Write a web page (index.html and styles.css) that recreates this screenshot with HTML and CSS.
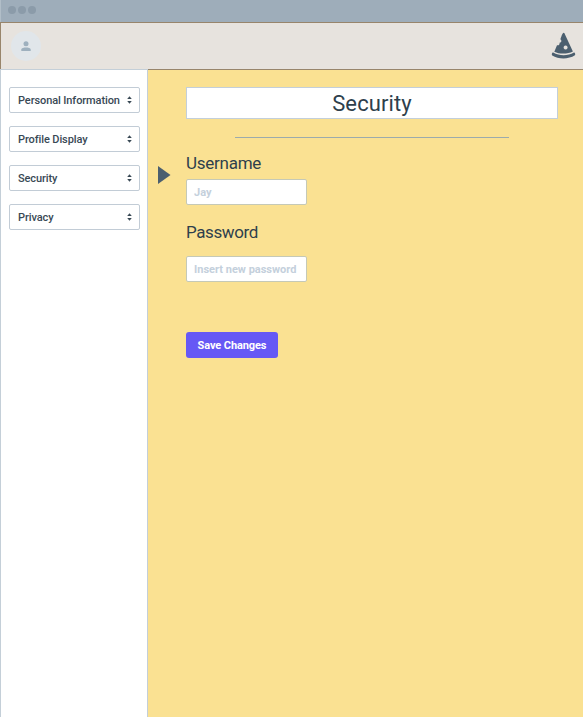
FILE: index.html
```html
<!DOCTYPE html>
<html lang="en">
<head>
<meta charset="utf-8">
<title>Security</title>
<link rel="stylesheet" href="styles.css">
</head>
<body>
<div class="window-bar"><i></i><i></i><i></i></div>
<header class="header">
  <div class="avatar">
    <svg width="10" height="11" viewBox="0 0 10 11"><circle cx="5" cy="2.8" r="2.5"/><path d="M.3 10V8.500C.3 7.200 3 6.600 5 6.600s4.700.6 4.700 1.900V10z"/></svg>
  </div>
  <svg class="pizza" width="26" height="28" viewBox="0 0 26 28">
    <path fill-rule="evenodd" d="M12.600.8C13.300.8 13.700 1.700 14 2.500L21.900 19.500C16.500 22.200 8.300 22.200 3.300 19.700L6 13.200C7.700 13.900 9 12.300 8.500 10.700C10.800 10.800 10.900 8.200 9.400 7.300C10.300 4.900 11.400.8 12.600.8ZM14.600 13.400a2 2 0 1 0 .01 0Z"/>
    <path d="M2.200 20.600C8.500 24.100 17 24 22.900 20.600C23.800 20.100 24.800 22.600 23.900 23.300C17.500 27.500 7.500 27.500 1.200 23.400C.2 22.700 1.200 20 2.200 20.600Z"/>
  </svg>
</header>
<div class="body">
  <nav class="sidebar">
    <button class="select"><span>Personal Information</span><svg width="5" height="8" viewBox="0 0 5 8"><path d="M.2 3L2.500.3l2.300 2.700zM.2 5h4.600l-2.300 2.700z"/></svg></button>
    <button class="select"><span>Profile Display</span><svg width="5" height="8" viewBox="0 0 5 8"><path d="M.2 3L2.500.3l2.300 2.700zM.2 5h4.600l-2.300 2.700z"/></svg></button>
    <button class="select"><span>Security</span><svg width="5" height="8" viewBox="0 0 5 8"><path d="M.2 3L2.500.3l2.300 2.700zM.2 5h4.600l-2.300 2.700z"/></svg></button>
    <button class="select"><span>Privacy</span><svg width="5" height="8" viewBox="0 0 5 8"><path d="M.2 3L2.500.3l2.300 2.700zM.2 5h4.600l-2.300 2.700z"/></svg></button>
  </nav>
  <main class="main">
    <svg class="pointer" width="13" height="18" viewBox="0 0 13 18"><path d="M0 0l12.500 9L0 18z"/></svg>
    <div class="content">
      <h1>Security</h1>
      <hr>
      <label class="username" for="user">Username</label>
      <input id="user" class="field jay" placeholder="Jay">
      <label class="password" for="pass">Password</label>
      <input id="pass" class="field" placeholder="Insert new password">
      <button class="save">Save Changes</button>
    </div>
  </main>
</div>
</body>
</html>
```
FILE: styles.css
```css
* { box-sizing: border-box; }
body {
  margin: 0;
  height: 717px;
  display: flex;
  flex-direction: column;
  overflow: hidden;
  font-family: Roboto, "Liberation Sans", sans-serif;
  color: #2e3f4c;
}
.window-bar {
  height: 22px;
  flex: none;
  display: flex;
  gap: 2px;
  padding: 6px 7px;
  background: #9eadba;
  border-left: 1px solid #b1bec8;
}
.window-bar i { width: 8px; height: 8px; border-radius: 50%; background: #8b9ba9; }
.header {
  height: 48px;
  flex: none;
  display: flex;
  justify-content: space-between;
  align-items: flex-start;
  padding: 8px 6px 0 10px;
  background: #e7e3de;
  border: solid #98856b;
  border-width: 1px 0 1px 1px;
}
.avatar {
  width: 30px;
  height: 30px;
  border-radius: 50%;
  background: #e1e6ea;
  display: grid;
  place-items: center;
}
.avatar svg { fill: #9eb0be; }
.pizza { fill: #4b5f6f; margin-top: 1px; }
.body { flex: 1; display: flex; min-height: 0; }
.sidebar {
  width: 148px;
  margin-top: -1px;
  padding: 17px 7px 0 8px;
  display: flex;
  flex-direction: column;
  gap: 13px;
  background: #fff;
  border: solid #c4cfd8;
  border-width: 1px 1px 0 1px;
}
.select {
  height: 26px;
  display: flex;
  align-items: center;
  justify-content: space-between;
  padding: 1px 7px 0 8px;
  border: 1px solid #c2ccd6;
  border-radius: 2px;
  background: #fff;
  font: 500 11px/14px Roboto, sans-serif;
  letter-spacing: -0.1px;
  color: #394955;
}
.select span { white-space: nowrap; }
.select svg { fill: #394955; flex: none; margin-top: -2px; }
.main { flex: 1; display: flex; align-items: flex-start; background: #fae192; padding-left: 10px; }
.pointer { fill: #4b5f6f; flex: none; margin-top: 96px; }
.content {
  width: 373px;
  margin: 17px 0 0 15px;
  display: flex;
  flex-direction: column;
  align-items: flex-start;
}
h1 {
  width: 372px;
  height: 32px;
  margin: 0;
  border: 1px solid #c3cfda;
  background: #fff;
  text-align: center;
  font-size: 22px;
  font-weight: 400;
  line-height: 31px;
  letter-spacing: 0.1px;
}
hr { width: 274px; height: 1px; margin: 18px 0 0 49px; border: 0; background: #9cabac; }
label { font-size: 17px; line-height: 22px; letter-spacing: -0.25px; }
.username { margin-top: 14px; }
.password { margin-top: 16px; letter-spacing: -0.4px; }
.field {
  width: 121px;
  height: 26px;
  margin-top: 13px;
  padding: 1px 7px 0;
  border: 1px solid #c5c9b7;
  border-radius: 2px;
  background: #fff;
  font: 700 11px/14px Roboto, sans-serif;
}
.field::placeholder { color: #c4d0dc; opacity: 1; }
.jay { margin-top: 5px; }
.save {
  width: 92px;
  height: 26px;
  margin-top: 50px;
  padding: 1px 0 0;
  border: 0;
  border-radius: 3px;
  background: #6658f5;
  color: #fff;
  font: 700 11px/14px Roboto, sans-serif;
  letter-spacing: -0.1px;
}
```
